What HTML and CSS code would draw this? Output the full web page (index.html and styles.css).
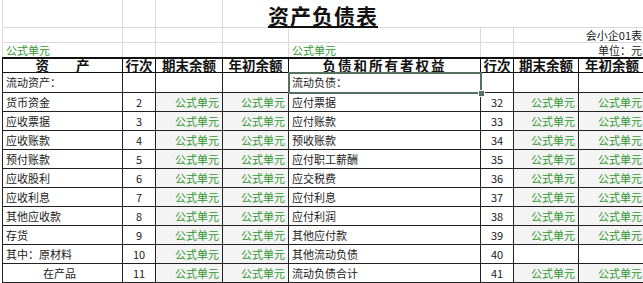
FILE: index.html
```html
<!DOCTYPE html>
<html lang="zh-CN">
<head>
    <meta charset="UTF-8">
    <title>资产负债表</title>
    <link rel="stylesheet" href="styles.css">
</head>
<body>
    <table class="sheet">
        <colgroup>
            <col class="col-name">
            <col class="col-no">
            <col class="col-amt">
            <col class="col-amt2">
            <col class="col-name-r">
            <col class="col-no">
            <col class="col-amt3">
            <col class="col-amt">
        </colgroup>
        <tr class="top title-row">
            <td></td><td></td><td></td>
            <td colspan="5" class="title"><span>资产负债表</span></td>
        </tr>
        <tr class="top">
            <td></td><td></td><td></td><td></td><td></td><td></td>
            <td colspan="2" class="right">会小企01表</td>
        </tr>
        <tr class="top">
            <td class="green">公式单元</td><td></td><td></td><td></td>
            <td class="green">公式单元</td><td></td>
            <td colspan="2" class="right">单位：元</td>
        </tr>
        <tr class="head">
            <td>资　　产</td>
            <td>行次</td>
            <td>期末余额</td>
            <td>年初余额</td>
            <td class="wide">负债和所有者权益</td>
            <td>行次</td>
            <td>期末余额</td>
            <td>年初余额</td>
        </tr>
        <tr class="row first">
            <td>流动资产：</td><td></td><td></td><td></td>
            <td class="sel">流动负债：</td><td></td><td></td><td></td>
        </tr>
        <tr class="row">
            <td>货币资金</td><td class="no">2</td><td class="amt">公式单元</td><td class="amt">公式单元</td>
            <td>应付票据</td><td class="no">32</td><td class="amt">公式单元</td><td class="amt">公式单元</td>
        </tr>
        <tr class="row">
            <td>应收票据</td><td class="no">3</td><td class="amt">公式单元</td><td class="amt">公式单元</td>
            <td>应付账款</td><td class="no">33</td><td class="amt">公式单元</td><td class="amt">公式单元</td>
        </tr>
        <tr class="row">
            <td>应收账款</td><td class="no">4</td><td class="amt">公式单元</td><td class="amt">公式单元</td>
            <td>预收账款</td><td class="no">34</td><td class="amt">公式单元</td><td class="amt">公式单元</td>
        </tr>
        <tr class="row">
            <td>预付账款</td><td class="no">5</td><td class="amt">公式单元</td><td class="amt">公式单元</td>
            <td>应付职工薪酬</td><td class="no">35</td><td class="amt">公式单元</td><td class="amt">公式单元</td>
        </tr>
        <tr class="row">
            <td>应收股利</td><td class="no">6</td><td class="amt">公式单元</td><td class="amt">公式单元</td>
            <td>应交税费</td><td class="no">36</td><td class="amt">公式单元</td><td class="amt">公式单元</td>
        </tr>
        <tr class="row">
            <td>应收利息</td><td class="no">7</td><td class="amt">公式单元</td><td class="amt">公式单元</td>
            <td>应付利息</td><td class="no">37</td><td class="amt">公式单元</td><td class="amt">公式单元</td>
        </tr>
        <tr class="row">
            <td>其他应收款</td><td class="no">8</td><td class="amt">公式单元</td><td class="amt">公式单元</td>
            <td>应付利润</td><td class="no">38</td><td class="amt">公式单元</td><td class="amt">公式单元</td>
        </tr>
        <tr class="row">
            <td>存货</td><td class="no">9</td><td class="amt">公式单元</td><td class="amt">公式单元</td>
            <td>其他应付款</td><td class="no">39</td><td class="amt">公式单元</td><td class="amt">公式单元</td>
        </tr>
        <tr class="row">
            <td>其中：原材料</td><td class="no">10</td><td class="amt">公式单元</td><td class="amt">公式单元</td>
            <td>其他流动负债</td><td class="no">40</td><td></td><td></td>
        </tr>
        <tr class="row">
            <td class="indent">在产品</td><td class="no">11</td><td class="amt">公式单元</td><td class="amt">公式单元</td>
            <td>流动负债合计</td><td class="no">41</td><td class="amt">公式单元</td><td class="amt">公式单元</td>
        </tr>
    </table>
</body>
</html>
```

FILE: styles.css
```css
html, body {
    margin: 0;
    overflow: hidden;
    background: #fff;
}

body {
    font-family: "Noto Sans CJK SC", "Noto Sans", sans-serif;
    font-size: 11px;
    color: #1a1a1a;
}

.sheet {
    border-collapse: collapse;
    table-layout: fixed;
    width: 643px;
    margin-left: 2px;
}

.col-name { width: 120px; }
.col-no { width: 33px; }
.col-amt { width: 67px; }
.col-amt2 { width: 66px; }
.col-name-r { width: 192px; }
.col-amt3 { width: 65px; }

.sheet td {
    padding: 0 3px;
    white-space: nowrap;
    overflow: hidden;
    line-height: 1;
}

/* sheet area above the table, plain gridlines */
.top td {
    border: 1px solid #dadada;
    height: 14px;
    line-height: 12px;
}

.title-row td {
    height: 27px;
    border-top: none;
}

.sheet .title {
    height: 24px;
    font-size: 21px;
    font-weight: bold;
    letter-spacing: 1px;
    padding: 3px 3px 0 45px;
    line-height: 24px;
    overflow: visible;
    color: #111;
}

.title span {
    text-decoration: underline;
    text-underline-offset: 2px;
}

.right {
    text-align: right;
}

.green {
    color: #2f962f;
}

/* table header */
.sheet .head td {
    border: 1px solid #111;
    border-top: 2px solid #111;
    height: 13px;
    font-size: 13.5px;
    font-weight: bold;
    text-align: center;
    padding: 0;
    color: #111;
    overflow: visible;
    line-height: 13px;
}

.head .wide {
    letter-spacing: 2px;
}

.row td {
    border: 1px solid #222;
    height: 18px;
}

.row.first td {
    height: 19px;
}

.no {
    text-align: center;
}

.amt {
    text-align: right;
    color: #2f962f;
    background: #f4f4f4;
}

.sheet .indent {
    padding-left: 40px;
}

/* selected cell */
.sheet .sel {
    position: relative;
    overflow: visible;
}

.sel::after {
    content: "";
    position: absolute;
    top: -1px;
    left: -1px;
    right: -2px;
    bottom: -2px;
    border: 2px solid #56705f;
}

.sel::before {
    content: "";
    position: absolute;
    right: -5px;
    bottom: -5px;
    width: 5px;
    height: 5px;
    background: #56705f;
    border: 1px solid #fff;
    z-index: 1;
}
```
